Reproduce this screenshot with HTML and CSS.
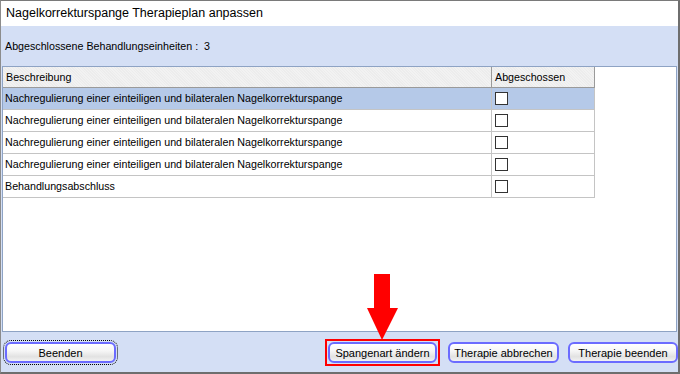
FILE: index.html
```html
<!DOCTYPE html>
<html lang="de">
<head>
<meta charset="utf-8">
<title>Nagelkorrekturspange Therapieplan anpassen</title>
<link rel="stylesheet" href="styles.css">
</head>
<body>
<div class="window">
  <div class="titlebar">Nagelkorrekturspange Therapieplan anpassen</div>
  <div class="content">
    <div class="summary">Abgeschlossene Behandlungseinheiten :  3</div>
    <div class="panel">
      <div class="grid">
        <div class="hcell">Beschreibung</div>
        <div class="hcell">Abgeschossen</div>

        <div class="cell sel">Nachregulierung einer einteiligen und bilateralen Nagelkorrekturspange</div>
        <div class="cell sel"><span class="check"></span></div>

        <div class="cell">Nachregulierung einer einteiligen und bilateralen Nagelkorrekturspange</div>
        <div class="cell"><span class="check"></span></div>

        <div class="cell">Nachregulierung einer einteiligen und bilateralen Nagelkorrekturspange</div>
        <div class="cell"><span class="check"></span></div>

        <div class="cell">Nachregulierung einer einteiligen und bilateralen Nagelkorrekturspange</div>
        <div class="cell"><span class="check"></span></div>

        <div class="cell">Behandlungsabschluss</div>
        <div class="cell"><span class="check"></span></div>
      </div>
    </div>
    <div class="buttons">
      <button class="btn focus">Beenden</button>
      <div class="right">
        <span class="highlight"><button class="btn w109">Spangenart ändern</button></span>
        <button class="btn w111">Therapie abbrechen</button>
        <button class="btn w110">Therapie beenden</button>
      </div>
    </div>
    <svg class="arrow" width="33" height="67" viewBox="0 0 33 67">
      <polygon points="8,0 24,0 24,34 32,34 16,66 1,34 8,34" fill="#ff0000"/>
    </svg>
  </div>
</div>
</body>
</html>
```

FILE: styles.css
```css
* { box-sizing: border-box; }
html, body { margin: 0; padding: 0; background: #ffffff; }
body { font-family: "Liberation Sans", Arial, sans-serif; font-size: 10.7px; color: #000; }

.window {
  width: 680px;
  height: 374px;
  border-left: 1px solid #8c8c8c;
  border-top: 1px solid #7a7a7a;
  border-right: 2px solid #6e6e6e;
  border-bottom: 2px solid #6e6e6e;
  display: flex;
  flex-direction: column;
  background: #d4dff5;
}

.titlebar {
  height: 25px;
  background: #ffffff;
  padding-left: 5px;
  font-family: "Liberation Sans", Arial, sans-serif;
  font-size: 12.5px;
  line-height: 25px;
}

.content {
  flex: 1;
  position: relative;
  display: flex;
  flex-direction: column;
}

.summary {
  height: 40px;
  line-height: 40px;
  padding-left: 4px;
  white-space: pre;
}

.panel {
  margin: 0 1px;
  height: 266px;
  border: 1px solid #8ea3c4;
  background: #ffffff;
}

.grid {
  display: grid;
  grid-template-columns: 489px 103px;
}

.hcell {
  height: 21px;
  line-height: 20px;
  padding-left: 3px;
  border-bottom: 1px solid #9a9a9a;
  border-right: 1px solid #9a9a9a;
  background: #f2f2f2;
  background-image: repeating-linear-gradient(45deg, rgba(0,0,0,0.025) 0 1px, transparent 1px 2px);
}

.cell {
  height: 22px;
  line-height: 21px;
  padding-left: 2px;
  border-bottom: 1px solid #c4c4c4;
  border-right: 1px solid #c4c4c4;
  white-space: nowrap;
  overflow: hidden;
}

.cell.sel { background: #b5c9e8; }

.check {
  display: block;
  width: 13px;
  height: 13px;
  margin: 4px 0 0 1px;
  border: 1px solid #333333;
  background: #ffffff;
}

.buttons {
  flex: 1;
  display: flex;
  align-items: flex-start;
  padding: 10px 0 0 4px;
}

.right {
  margin-left: auto;
  display: flex;
  align-items: flex-start;
  gap: 9px;
}

.btn {
  height: 21px;
  padding: 0;
  border: 2px solid #6b6bff;
  border-radius: 6px;
  background: linear-gradient(to bottom, #ffffff 0%, #f6f6f6 40%, #e2e2e2 75%, #f2f2f2 100%);
  font-family: "Liberation Sans", Arial, sans-serif;
  font-size: 11px;
  color: #000;
  line-height: 16px;
}

.btn.focus {
  width: 111px;
  outline: 1px dotted #000;
  outline-offset: 1px;
}

.w109 { width: 109px; }
.w110 { width: 110px; }
.w111 { width: 111px; }

.highlight {
  display: block;
  margin-top: -3px;
  margin-right: -1px;
  padding: 1px;
  border: 2px solid #ff0000;
}

.arrow {
  position: absolute;
  left: 365px;
  top: 248px;
}
```
